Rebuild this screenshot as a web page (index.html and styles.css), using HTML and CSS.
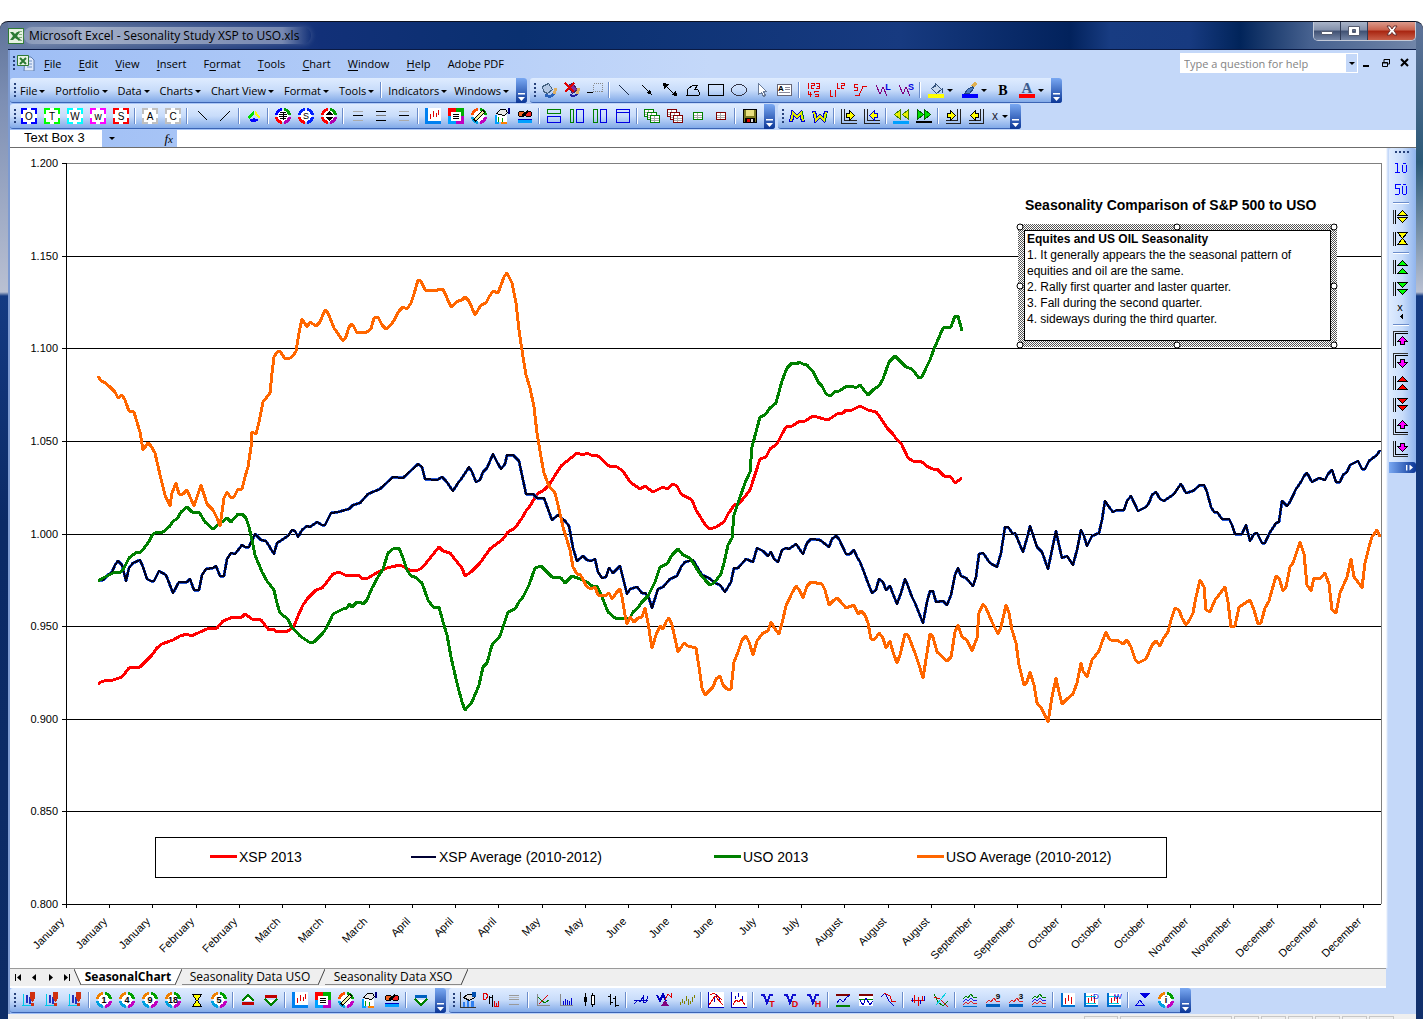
FILE: index.html
```html
<!DOCTYPE html>
<html lang="en">
<head>
    <meta charset="UTF-8">
    <meta name="viewport" content="width=device-width, initial-scale=1.0">
    <title>Microsoft Excel - Sesonality Study XSP to USO.xls</title>
    <link rel="stylesheet" href="styles.css">
</head>
<body>
    <div class="window">
        <header class="titlebar">
            <svg class="icon" viewBox="0 0 16 16"><path d="M0 0h16v16H0z" fill="#2f7a35"/><path d="M1 1h14v14H1z" fill="#e6f2e2"/><path d="M10 3.500h4M11 6.500h3M11 9.500h3M10 12.500h4" stroke="#7fb07c"/><path d="M2 4h3l2 2 2-2h3L9 8l4 4h-3L7 10l-2 2H2l3-4z" fill="#2b7a33"/></svg>
            <h1 class="title">Microsoft Excel - Sesonality Study XSP to USO.xls</h1>
            <div class="window-controls">
                <button class="control" aria-label="Minimize"><svg viewBox="0 0 14 12"><path d="M1.500 6.500h11v3h-11z" fill="#fff" stroke="#555c70"/></svg></button>
                <button class="control" aria-label="Maximize"><svg viewBox="0 0 14 12"><path d="M1.500 1.500h11v9h-11zM5.500 4.500v3h3v-3z" fill="#fff" fill-rule="evenodd" stroke="#555c70"/></svg></button>
                <button class="control close" aria-label="Close"><svg viewBox="0 0 14 12"><path d="M2 1h3l2 3 2-3h3L9 5.500l3 4.500H9L7 7.500 5 10H2l3-4.500z" fill="#fff" stroke="#6a3030"/></svg></button>
            </div>
        </header>

        <main class="client">
            <nav class="menubar">
                <span class="grip"></span>
                <svg class="icon menu-logo" viewBox="0 0 18 16"><path d="M8 2h6l3 3v11H7z" fill="#dfe9fa" stroke="#5c7db0"/><path d="M12 6h3M12 9h3M10 12h5" stroke="#6e8fc4"/><path d="M.5 .5h11v10H.5z" fill="#e6f2e2" stroke="#2f7a35"/><path d="M3 3l6 6M9 3L3 9" stroke="#2b7a33" stroke-width="2"/></svg>
                <div class="menus">
                    <button><u>F</u>ile</button>
                    <button><u>E</u>dit</button>
                    <button><u>V</u>iew</button>
                    <button><u>I</u>nsert</button>
                    <button>F<u>o</u>rmat</button>
                    <button><u>T</u>ools</button>
                    <button><u>C</u>hart</button>
                    <button><u>W</u>indow</button>
                    <button><u>H</u>elp</button>
                    <button>Ado<u>b</u>e PDF</button>
                </div>
                <div class="help-box">
                    <input type="text" aria-label="Help question" placeholder="Type a question for help">
                    <button aria-label="Recent questions"><span class="caret"></span></button>
                </div>
                <div class="doc-controls">
                    <button aria-label="Minimize workbook"><svg viewBox="0 0 10 10"><path d="M1 7h6v2H1z"/></svg></button>
                    <button aria-label="Restore workbook"><svg viewBox="0 0 10 10"><path d="M3 4V1.500h5.500V6H7M3 1.500h6M1.500 4.500h5v4h-5zM1 5h6" fill="none" stroke="#000"/></svg></button>
                    <button aria-label="Close workbook"><svg viewBox="0 0 10 10"><path d="M1 1l7 7M8 1L1 8" stroke="#000" stroke-width="2"/></svg></button>
                </div>
            </nav>

            <div class="toolbar-row">
                <div class="toolbar text-toolbar">
                    <span class="grip"></span>
                    <div class="menus">
                        <button>File<span class="caret"></span></button>
                        <button>Portfolio<span class="caret"></span></button>
                        <button>Data<span class="caret"></span></button>
                        <button>Charts<span class="caret"></span></button>
                        <button>Chart View<span class="caret"></span></button>
                        <button>Format<span class="caret"></span></button>
                        <button>Tools<span class="caret"></span></button>
                    </div>
                    <span class="sep"></span>
                    <div class="menus menus-end">
                        <button>Indicators<span class="caret"></span></button>
                        <button>Windows<span class="caret"></span></button>
                    </div>
                    <button class="cap" aria-label="Toolbar options"></button>
                </div>
                <div class="toolbar" data-tools="paint paintOff gridLine | line arrow arrows freeform rect oval pointer textbox | nums labels curve waveL waveS | fill+ brush+ bold fontColor+"></div>
            </div>

            <div class="toolbar-row">
                <div class="toolbar" data-tools="boxO boxT boxW boxw boxS | boxA boxC | lineDown lineUp | pie | ringList ringS ringMove | rows1 rows2 rows3 | chart report design hand link | splitH splitL splitV splitT | sheetsG sheetsR sheetG sheetR | save"></div>
                <div class="toolbar" data-tools="zigM zigW | inRight inLeft | rewind forward | outRight outLeft x+"></div>
            </div>

            <div class="formula-bar">
                <input class="name-box" type="text" aria-label="Name box" value="Text Box 3">
                <button class="name-drop" aria-label="Names"><span class="caret"></span></button>
                <button class="fx" aria-label="Insert function"><i>f</i><sub>x</sub></button>
                <input class="formula" type="text" aria-label="Formula">
            </div>

            <div class="workspace">
                <svg class="chart" viewBox="10 148 1376 820">
                    <defs>
                        <pattern id="dots" width="2" height="2" patternUnits="userSpaceOnUse">
                            <path d="M0 0h2v2H0z" fill="#fff"/>
                            <path d="M0 0h1v1H0zM1 1h1v1H1z" fill="#555"/>
                        </pattern>
                    </defs>
                    <path class="frame" d="M66 163.500H1381.500V904"/>
                    <g id="grid"></g>
                    <g id="axis-labels"></g>
                    <g id="series"></g>
                    <text class="chart-title" x="1025" y="210">Seasonality Comparison of S&amp;P 500 to USO</text>
                    <g class="note">
                        <rect x="1018" y="224" width="319" height="123" fill="url(#dots)"/>
                        <rect class="note-box" x="1024.500" y="230.500" width="306" height="110"/>
                        <g id="handles"></g>
                        <text class="bold" x="1027" y="243">Equites and US OIL Seasonality</text>
                        <text x="1027" y="259">1. It generally appears the the seasonal pattern of</text>
                        <text x="1027" y="275">equities and oil are the same.</text>
                        <text x="1027" y="291">2. Rally first quarter and laster quarter.</text>
                        <text x="1027" y="307">3. Fall during the second quarter.</text>
                        <text x="1027" y="323">4. sideways during the third quarter.</text>
                    </g>
                    <g class="legend">
                        <rect x="155.500" y="837.500" width="1011" height="40"/>
                        <path d="M210 856.500h27" stroke="#ff0000"/><text x="239" y="862">XSP 2013</text>
                        <path d="M411 857h25" stroke="#000033" class="thin"/><text x="439" y="862">XSP Average (2010-2012)</text>
                        <path d="M714 856.500h27" stroke="#008000"/><text x="743" y="862">USO 2013</text>
                        <path d="M917 856.500h27" stroke="#ff6600"/><text x="946" y="862">USO Average (2010-2012)</text>
                    </g>
                </svg>
                <aside class="toolbar side" data-tools="n10 n50 | spread squeeze | upUp downDown xSide | topUp topDown redUp redDown bottomUp bottomDown"></aside>
            </div>

            <div class="tabs">
                <button class="tab-nav" aria-label="First sheet"><svg viewBox="0 0 9 9"><path d="M1 1h1v7H1zM7 1v7L3 4.500z"/></svg></button>
                <button class="tab-nav" aria-label="Previous sheet"><svg viewBox="0 0 9 9"><path d="M6 1v7L2 4.500z"/></svg></button>
                <button class="tab-nav" aria-label="Next sheet"><svg viewBox="0 0 9 9"><path d="M3 1v7l4-3.500z"/></svg></button>
                <button class="tab-nav" aria-label="Last sheet"><svg viewBox="0 0 9 9"><path d="M7 1h1v7H7zM2 1v7l4-3.500z"/></svg></button>
                <svg class="slant" viewBox="0 0 7 17"><path class="paper" d="M0 0h7v17z"/><path d="M0 0l7 16"/></svg>
                <button class="tab active">SeasonalChart</button>
                <svg class="slant" viewBox="0 0 7 17"><path class="paper" d="M0 0h7L0 17z"/><path d="M7 0L0 16"/></svg>
                <button class="tab">Seasonality Data USO</button>
                <svg class="slant" viewBox="0 0 7 17"><path d="M7 0L0 16"/></svg>
                <button class="tab">Seasonality Data XSO</button>
                <svg class="slant" viewBox="0 0 7 17"><path d="M7 0L0 16"/></svg>
            </div>

            <div class="toolbar-row bottom">
                <div class="toolbar" data-tools="alert1 alert2 alert3 | ring1 ring4 ring9 ring18 hourglass ring5 | roofUp roofDown | chart report design hand link | roofBlue"></div>
                <div class="toolbar" data-tools="studio dw rowsGray | cross bars candle ohlc | trend fan dots | peaks peaks2 | vT vD vH | band band2 slope | volume weave | wave1 wave9 wave3 wave4 | redBars redBarsD redBarsW | flip ringI"></div>
            </div>
        </main>
        <footer class="statusbar">
            <span class="cell wide"></span><span class="cell widest"></span><span class="cell"></span><span class="cell"></span><span class="cell"></span><span class="cell"></span><span class="cell"></span><span class="cell"></span>
        </footer>
    </div>
    <script src="script.js"></script>
</body>
</html>
```
FILE: styles.css
```css
* {
    box-sizing: border-box;
}

body {
    margin: 0;
    padding-top: 21px;
    background: #fff;
    font-family: "Open Sans", "Noto Sans", sans-serif;
    font-size: 11px;
    color: #000;
    height: 100vh;
    overflow: hidden;
}

button {
    border: 0;
    padding: 0;
    background: none;
    font: inherit;
    color: inherit;
    display: flex;
    align-items: center;
    justify-content: center;
}

input {
    border: 0;
    padding: 0;
    font: inherit;
    min-width: 0;
}

.window {
    padding: 0 7px 0 8px;
    height: 100%;
    display: flex;
    flex-direction: column;
    border-top: 1px solid #0b1020;
    border-radius: 8px 8px 0 0;
    background:
        linear-gradient(#5f7399 0, #7d8fb4 80px, #b9c0d2 270px, #143a82 274px, #0b2a66 500px, #0d2c66) left / 8px 100% no-repeat,
        linear-gradient(#5f7399 0, #2c5a78 140px, #b9c0d2 270px, #143a82 274px, #11306b) right / 7px 100% no-repeat,
        linear-gradient(90deg, #6a7fa6, #4a6192 120px, #123078 320px, #0a3070 520px, #173a80 900px, #02225c 1070px, #183c82 1110px, #173a80 1190px, #01245a 1240px, #46618f 1310px, #7488aa);
}

.icon {
    width: 16px;
    height: 16px;
    flex: none;
}

/* title bar */
.titlebar {
    height: 28px;
    display: flex;
    align-items: center;
    border-bottom: 1px solid #0a1a44;
    flex: none;
}

.title {
    margin: 0;
    padding: 0 12px 0 5px;
    font-size: 12px;
    font-weight: normal;
    background: linear-gradient(90deg, rgba(255, 255, 255, 0.25), rgba(255, 255, 255, 0.45) 20%, rgba(255, 255, 255, 0.4) 90%, rgba(255, 255, 255, 0));
    border-radius: 8px;
    box-shadow: 0 0 6px rgba(255, 255, 255, 0.2);
}

.window-controls {
    display: flex;
    margin-left: auto;
    align-self: flex-start;
    height: 19px;
    border: 1px solid #c3cad8;
    border-top: 0;
    border-radius: 0 0 5px 5px;
    overflow: hidden;
}

.control {
    width: 27px;
    border-right: 1px solid #303c58;
    background: linear-gradient(#a9b4c8, #8390ab 45%, #3f5072 50%, #7485a5);
}

.control svg {
    width: 14px;
    height: 12px;
}

.close {
    width: 47px;
    border: 0;
    background: linear-gradient(#dc9a8c, #c8614c 45%, #a82410 50%, #c9604a);
}

.client {
    background: linear-gradient(90deg, #9ebef5, #c4d8f9 700px);
    border-left: 2px solid #7d9ad0;
    flex: none;
}

/* menus */
.menubar {
    height: 28px;
    display: flex;
    align-items: center;
    padding: 0 6px 2px 3px;
}

.grip {
    width: 3px;
    height: 15px;
    flex: none;
    background: repeating-linear-gradient(#27417a 0 2px, transparent 2px 4px);
    background-size: 2px 100%;
    background-repeat: no-repeat;
}

.menus {
    display: flex;
    justify-content: space-between;
    align-items: center;
}

.menubar .menus {
    width: 460px;
    margin-left: 9px;
}

.menu-logo {
    width: 18px;
    margin-left: 1px;
}

u {
    text-underline-offset: 2px;
}

.menus button {
    display: block;
    white-space: nowrap;
}

.caret {
    display: inline-block;
    border: 3px solid transparent;
    border-top-color: #000;
    border-bottom: 0;
    vertical-align: middle;
}

.menus .caret {
    margin-left: 2px;
}

.help-box {
    display: flex;
    width: 178px;
    height: 20px;
    margin-left: auto;
    padding: 1px;
    background: #fff;
}

.help-box input {
    flex: 1;
    padding: 0 3px;
}

.help-box input::placeholder {
    color: #838383;
}

.help-box button {
    width: 11px;
    background: #c4d8f9;
}

.doc-controls {
    display: flex;
    gap: 9px;
    margin-left: 4px;
}

.doc-controls svg {
    width: 10px;
    height: 10px;
    display: block;
}

/* toolbars */
.toolbar-row {
    display: flex;
    gap: 3px;
    height: 26px;
}

.toolbar {
    display: flex;
    align-items: center;
    height: 25px;
    border-radius: 3px;
    border-bottom: 1px solid #3b64b4;
    background: linear-gradient(#dfecff, #c8dcfa 50%, #82aae8);
}

.toolbar .grip {
    margin-left: 4px;
}

.text-toolbar {
    width: 517px;
}

.text-toolbar .menus {
    flex: 1;
    padding: 0 4px 0 3px;
}

.text-toolbar .menus-end {
    flex: none;
    gap: 7px;
    padding: 0 4px;
}

.tool {
    width: 23px;
    height: 23px;
}

.tool .icon {
    shape-rendering: crispEdges;
}

.tool text {
    font-family: "Liberation Sans", Arial, sans-serif;
}

.split {
    width: 34px;
    gap: 3px;
}

.narrow {
    width: 20px;
    gap: 0;
}

.sep {
    width: 6px;
    height: 16px;
    flex: none;
    background: linear-gradient(90deg, transparent 2px, #6a8ccb 2px 3px, #fff 3px 4px, transparent 4px);
}

.cap {
    align-self: stretch;
    width: 11px;
    margin: 0 0 -1px 3px;
    border-radius: 0 3px 3px 0;
    background: linear-gradient(#79a8f2, #0b3696);
    align-items: flex-end;
    padding-bottom: 2px;
}

.cap::after {
    content: "";
    width: 7px;
    height: 8px;
    background: #fff;
    clip-path: polygon(0 0, 100% 0, 100% 20%, 0 20%, 0 50%, 100% 50%, 50% 100%, 0 50%);
}

/* formula bar */
.formula-bar {
    display: flex;
    height: 18px;
    border-bottom: 1px solid #6c6c6c;
    font-family: "Liberation Sans", Arial, sans-serif;
    font-size: 13px;
}

.name-box {
    width: 92px;
    padding: 0 0 2px 14px;
}

.name-drop {
    width: 19px;
}

.fx {
    width: 56px;
    justify-content: flex-end;
    padding-right: 4px;
    font-family: "Liberation Serif", serif;
    font-style: italic;
}

.fx sub {
    font-size: 11px;
}

.formula {
    flex: 1;
}

/* chart */
.workspace {
    display: flex;
    align-items: flex-start;
    gap: 3px;
    background: linear-gradient(90deg, #fff calc(100% - 30px), #c4d8f9 calc(100% - 28px));
}

.chart {
    flex: 1;
    min-width: 0;
    display: block;
    background: #fff;
    font-family: "Liberation Sans", Arial, sans-serif;
    font-size: 11px;
}

.frame {
    fill: none;
    stroke: #808080;
    shape-rendering: crispEdges;
}

#grid path {
    stroke: #000;
    shape-rendering: crispEdges;
}

#series path {
    fill: none;
    stroke-width: 3;
    stroke-linejoin: round;
    shape-rendering: crispEdges;
}

#series .average {
    stroke-width: 2;
}

#axis-labels text {
    text-anchor: end;
}

.chart-title {
    font-size: 14px;
    font-weight: bold;
}

.note text {
    font-size: 12px;
}

.bold {
    font-weight: bold;
}

.note-box,
.note circle {
    fill: #fff;
    stroke: #000;
}

.legend {
    font-size: 14px;
}

.legend rect {
    fill: #fff;
    stroke: #000;
}

.legend path {
    stroke-width: 3;
}

.legend .thin {
    stroke-width: 2;
}

.side {
    width: 27px;
    height: auto;
    flex-direction: column;
    border-bottom: 0;
    background: linear-gradient(90deg, #dfecff, #c8dcfa 50%, #8fb4ee);
}

.side .grip {
    width: 15px;
    height: 3px;
    margin: 3px 0 2px;
    background: repeating-linear-gradient(90deg, #27417a 0 2px, transparent 2px 4px);
    background-size: 100% 2px;
    background-repeat: no-repeat;
}

.side .tool {
    height: 22px;
    margin-right: 3px;
}

.side .sep {
    width: 16px;
    height: 6px;
    margin-right: 3px;
    background: linear-gradient(transparent 2px, #6a8ccb 2px 3px, #fff 3px 4px, transparent 4px);
}

.side .cap {
    width: 100%;
    height: 11px;
    margin: 2px 0 0;
    padding: 0 3px 0 0;
    align-items: center;
    justify-content: flex-end;
    background: linear-gradient(90deg, #79a8f2, #0b3696);
}

.side .cap::after {
    width: 7px;
    height: 6px;
    clip-path: polygon(0 0, 20% 0, 20% 100%, 0 100%, 0 0, 50% 0, 100% 50%, 50% 100%, 50% 0);
}

/* sheet tabs */
.tabs {
    display: flex;
    height: 20px;
    background: #efefef;
    border-top: 1px solid #9a9a9a;
    border-bottom: 2px solid #fff;
    margin-right: 30px;
}

.tab-nav {
    width: 16px;
}

.tab-nav svg {
    width: 9px;
    height: 9px;
}

.slant {
    width: 7px;
    height: 17px;
    flex: none;
    stroke: #444;
}

.slant .paper {
    fill: #fff;
    stroke: none;
}

.tab {
    min-width: 136px;
    height: 16px;
    border-bottom: 1px solid #8a8a8a;
    font-size: 12px;
}

.tab.active {
    min-width: 94px;
    background: #fff;
    font-weight: bold;
}

.statusbar {
    flex: 1;
    display: flex;
    justify-content: flex-end;
    gap: 2px;
    padding: 2px 22px 0 0;
    background: #efefef;
    overflow: hidden;
}

.cell {
    width: 25px;
    height: 12px;
    border: 1px solid #c6c6c6;
}

.wide {
    width: 34px;
}

.widest {
    width: 112px;
}
```
FILE: script.js
```js
// ---------- icon helpers, every icon is drawn on a 16x16 grid ----------
const s = (c, d, w = 1) => `<path d="${d}" fill="none" stroke="${c}" stroke-width="${w}"/>`;
// outlined shapes on whole coordinates move half a pixel to keep a 1px edge
const f = (c, d, edge = "none") => {
    const shift = edge !== "none" && !d.includes(".5") ? ' transform="translate(.5 .5)"' : "";
    return `<path d="${d}" fill="${c}" stroke="${edge}"${shift}/>`;
};
const t = (c, x, y, str, size = 9, weight = "normal") =>
    `<text x="${x}" y="${y}" fill="${c}" font-size="${size}" font-weight="${weight}" text-anchor="middle">${str}</text>`;

const frame = (c, letter) =>
    f("#fff", "M0 0h16v16H0z") +
    s(c, "M1 6V1h5M10 1h5v5M15 10v5h-5M6 15H1v-5", 2) +
    t("#000", 8, 12, letter, 10);

const ring = (tl, tr, br, bl, inner) =>
    '<circle cx="8" cy="8" r="6" fill="#fff"/>' +
    s(tl, "M1.500 7A6.500 6.500 0 0 1 7 1.500", 3) + s(tr, "M9 1.500A6.500 6.500 0 0 1 14.500 7", 3) +
    s(br, "M14.500 9A6.500 6.500 0 0 1 9 14.500", 3) + s(bl, "M7 14.500A6.500 6.500 0 0 1 1.500 9", 3) + inner;

const numRing = n => ring("#f08000", "#00a000", "#c000c0", "#00a0e0", t("#000", 8, 11, n, 9, "bold"));
const rows = (a, b, c) => s(a, "M3 3.500h10") + s(b, "M3 7.500h10") + s(c, "M3 12.500h10");
const sheet = (c, x, y) => f("#fff", `M${x}.5 ${y}.5h9v7h-9z`, c) + s("#aaa", `M${x + 1} ${y + 3}.5h8M${x + 1} ${y + 5}.5h8M${x + 4}.5 ${y + 1}v6`);
const sheets = c => sheet(c, 0, 1) + sheet(c, 3, 4) + sheet(c, 6, 7);
const up = (c, y) => f(c, `M9 ${y}l5 5H4z`, "#000");
const down = (c, y) => f(c, `M4 ${y}h10l-5 5z`, "#000");
const rails = s("#333", "M.5 1v14") + s("#000", "M2.500 1v14");
const alertIcon = s("#00c8e8", "M1 13.500h12M2.500 2v12") + s("#2030c0", "M5.500 3v8M8.500 5v7", 2) +
    f("#d03010", "M9 0h5v6l-2 4h-1L9 6z") + f("#d03010", "M10 11h3v3h-3z");
const waves = s("#008000", "M1 7l3-3 2 2 3-4 3 4 3-1") + s("#2020e0", "M1 10l3-3 2 2 3-3 3 3 3-1") +
    s("#e02020", "M1 13l3-3 2 2 3-3 3 3 3-1") + s("#0070d0", "M1 14.500h14");
const waveNum = n => s("#e02020", "M1 11l3-3 2 2 3-4 3 4 3-1") + f("#0060c0", "M1 12h14v3H1z") + t("#000", 13, 7, n, 8, "bold");
const redBars = extra => f("#fff", "M1 1h14v14H1z") + s("#0070d0", "M2 1v13h13", 2) +
    s("#e00000", "M5.500 6v6M8.500 3v6M11.500 5v7") + extra;
const vIcon = l => s("#1010d0", "M1 3h3l3 8 3-8h3", 2) + t("#e00000", 12, 15, l, 9, "bold");
const wIcon = (l, c) => s("#800080", "M1 3l4 9 3-7 4 9") + t(c, 13, 8, l, 9, "bold");
const railArrow = (path, arrow) => s("#222", path) + arrow;
const rightArrow = f("#ffff00", "M5 5h3V2l5 5-5 5V9H5z", "#000");
const leftArrow = f("#ffff00", "M10 5H7V2L2 7l5 5V9h3z", "#000");
const magUp = f("#ff00ff", "M9 5l5 5h-3v3H7v-3H4z", "#000");
const magDown = f("#ff00ff", "M9 14l5-5h-3V6H7v3H4z", "#000");

const icons = {
    paint: f("#b4c8e4", "M1 4l6-3 4 6-5 4-4-2z", "#42607f") + s("#e0b060", "M15 6l-2 6", 3) + s("#2a62b8", "M4 13q6 3 9-1", 3),
    paintOff: f("#8030a0", "M3 3l5-2 5 6-5 4z", "#402060") + s("#e0b060", "M15 6l-2 6", 3) + s("#2020a0", "M6 13q5 2 7-1", 2) + s("#e00000", "M1 1l9 9M10 1L1 10", 2),
    gridLine: '<path d="M6.500 1.500h9v8h-9z" fill="none" stroke="#888" stroke-dasharray="1 1"/>' + s("#000", "M0 10.500h6"),
    line: s("#1b2c4a", "M3 3l10 10"),
    arrow: s("#000", "M3 3l6 6") + f("#000", "M13 13l-6-2 4-4z"),
    arrows: s("#000", "M3 3l9 9") + f("#000", "M1 1l6 1-5 5zM15 14l-6-1 5-5z"),
    freeform: s("#000", "M2 13l1-6 5-4h5l-3 4q5 0 4 6z"),
    rect: s("#000", "M.5 2.500h15v11H.5z"),
    oval: '<ellipse cx="8" cy="8" rx="7.500" ry="5.500" fill="none" stroke="#334"/>',
    pointer: f("#fff", "M4 1v11l3-2 2 4 2-1-2-4h3z", "#6a7b98"),
    textbox: f("#fff", "M.5 2.500h14v11H.5z", "#667") + t("#000", 4, 9, "A", 8, "bold") + s("#889", "M8 5.500h5M8 7.500h5M2 10.500h11"),
    nums: s("#e00000", "M2.500 1v6M5 1.500h3v2H5.500v3H8M10 1.500h3.500v5H10M11 4.500h2M2.500 9v3H6M4.500 10v5M8 10.500V9h5M9 12.500h3.500v2H9"),
    labels: s("#e00000", "M8.500 1v5.500H11M12 1.500h3v2h-2.500v3H15M1.500 8v6.500H4M6.500 8v7"),
    curve: s("#e00000", "M6 2.500H2.500v3h3v3H2M3 13.500h4l4-9h4"),
    waveL: wIcon("L", "#0000e0"),
    waveS: wIcon("S", "#0000e0"),
    fill: f("#c7d8ee", "M3 6l5-4 5 5-5 4z", "#35547e") + s("#35547e", "M7 5V1M14 6v5") + f("#ffff00", "M0 12h16v4H0z"),
    brush: s("#e0b050", "M14 1l-4 4", 3) + f("#4f7ec0", "M10 4l-5 3-3 4h5l4-5z", "#23497f") + f("#0000ff", "M0 12h16v4H0z"),
    bold: `<text x="8" y="13" text-anchor="middle" font-size="14" font-weight="bold" style="font-family:'Liberation Serif',serif">B</text>`,
    fontColor: `<text x="8" y="11" text-anchor="middle" font-size="15" font-weight="bold" fill="#3b5a8c" style="font-family:'Liberation Serif',serif">A</text>` + f("#ff0000", "M0 12h16v4H0z"),

    boxO: frame("#0000ff", "O"), boxT: frame("#00ff00", "T"), boxW: frame("#00ffff", "W"),
    boxw: frame("#ff00ff", "w"), boxS: frame("#ff0000", "S"),
    boxA: frame("#c0c0c0", "A"), boxC: frame("#c0c0c0", "C"),
    lineDown: s("#000", "M4 3l9 9"), lineUp: s("#000", "M3 13l10-10"),
    pie: f("#00e000", "M8 2v5l-5 4-1-2z") + f("#ffff00", "M9 2l5 7-1 2-4-4z") + f("#0000ff", "M3 12l5-2 5 2q-5 4-10 0z"),
    ringList: ring("#0000ff", "#00a000", "#b000b0", "#ff0000", s("#000", "M5 4.500h6M4 6.500h8M4 8.500h8M5 10.500h6M8.500 4v8")),
    ringS: ring("#0020ff", "#0020ff", "#0020ff", "#ff0000", t("#000", 8, 11, "S", 9)),
    ringMove: ring("#ff0000", "#00a000", "#b000b0", "#ff0000", f("#000", "M8 3l4 4H4zM8 13l4-4H4z")),
    rows1: rows("#aaa", "#000", "#aaa"),
    rows2: rows("#000", "#777", "#000"),
    rows3: rows("#aaa", "#000", "#aaa"),
    rowsGray: rows("#999", "#999", "#999") + s("#bbb", "M3 5.500h10"),
    chart: f("#fff", "M2 0h14v14H2z") + s("#0080f0", "M1.500 0v14.500h14", 3) + s("#e00000", "M5.500 6v5M8.500 3v6M11.500 5v4M13.500 2v5"),
    report: f("#ff0000", "M0 0h8v8H0z") + f("#00b000", "M8 0h8v8H8z") + f("#c000c0", "M8 8h8v8H8z") + f("#00a0ff", "M0 8h8v8H0z") +
        f("#fff", "M3 4h10v9H3z") + s("#000", "M5 6.500h6M5 8.500h6M5 10.500h6"),
    design: ring("#ff5000", "#00a000", "#c000c0", "#00a0e0", s("#000", "M3 13L13 3", 4) + s("#f0f0a0", "M4 12l8-8", 2)),
    hand: f("#fff", "M1 14V7h12v7z") + f("#e8e8e8", "M2 5l4-4h5l2 3-3 3-5-1z", "#000") + f("#000080", "M14 0h2v6h-2z") +
        s("#00a000", "M4.500 9v5M8.500 10v4") + s("#00a0ff", "M1.500 7v8h3", 2) + s("#ff8000", "M7 14.500h6", 2),
    link: '<circle cx="4.500" cy="6" r="3" fill="#f06020" stroke="#000"/><circle cx="11.500" cy="6" r="3" fill="#f02020" stroke="#000"/>' +
        s("#000", "M5 8l6-5", 2) + f("#00a0ff", "M1 12h14v3H1z") + s("#0000c0", "M1 11.500h14"),
    splitH: s("#008000", "M1.500 1.500h13v4h-13z") + s("#0000e0", "M1.500 8.500h13v6h-13z"),
    splitL: s("#008000", "M1.500 1.500h3v13h-3z") + s("#0000e0", "M7.500 1.500h7v13h-7z"),
    splitV: s("#008000", "M1.500 1.500h4v13h-4z") + s("#0000e0", "M8.500 1.500h6v13h-6z"),
    splitT: s("#0000e0", "M1.500 1.500h13v13h-13zM1.500 4.500h13"),
    sheetsG: sheets("#008000"), sheetsR: sheets("#800000"),
    sheetG: sheet("#008000", 3, 4), sheetR: sheet("#800000", 3, 4),
    save: f("#7a7a20", "M1 1h13v13H1z", "#000") + f("#e8e080", "M4 2h8v6H4z") + f("#000", "M3 10h10v5H3z") + f("#e00000", "M5 11h3v3H5z") + f("#ddd", "M9 11h2v3H9z"),
    zigM: s("#0000d0", "M2 14l2-9 4 4 4-4 2 9", 4) + s("#008000", "M10 6l3-3 2 10") + s("#e0e800", "M2 13l2-8 4 4 4-4 2 8", 2),
    zigW: s("#0000d0", "M2 3l2 9 4-4 4 4 2-9", 4) + s("#008000", "M9 10l4 3 2-9") + s("#e0e800", "M2 4l2 8 4-4 4 4 2-8", 2),
    inRight: railArrow("M.5 1v14.500h15M3.500 1v11.500h12", rightArrow),
    inLeft: railArrow("M.5 1v14.500h15M3.500 1v11.500h12", f("#ffff00", "M13 5h-3V2L5 7l5 5V9h3z", "#0000d0")),
    rewind: f("#e8f000", "M7 1v10L1 6zM15 1v10L9 6z", "#408000") + s("#00a0ff", "M0 14h16", 3),
    forward: f("#00e000", "M1 1v10l6-5zM8 1v10l6-5z", "#006000") + s("#000", "M0 14h16", 2),
    outRight: railArrow("M15.500 1v14.500H.5M12.500 1v11.500H.5", f("#ffff00", "M2 5h3V2l5 5-5 5V9H2z", "#000")),
    outLeft: railArrow("M15.500 1v14.500H.5M12.500 1v11.500H.5", leftArrow),
    x: t("#223", 9, 12, "x", 12),

    n10: s("#0000ff", "M2 4.500h2.500v9M2 13.500h5M9.500 5.500v7M13.500 5.500v7M10 4.500h3M10 13.500h3"),
    n50: s("#0000ff", "M7.500 3.500h-5v4h4M6.500 8v5M2 13.500h4M9.500 4.500v8M13.500 4.500v8M10 3.500h3M10 13.500h3"),
    spread: rails + f("#ffff00", "M9 1l5 5H4z", "#000") + f("#ffff00", "M4 8h10l-5 5z", "#000"),
    squeeze: rails + f("#ffff00", "M4 1h10L9 7z", "#000") + f("#ffff00", "M9 7l5 6H4z", "#000"),
    upUp: rails + up("#00ff00", 1) + up("#00ff00", 9),
    downDown: rails + down("#00ff00", 1) + down("#00ff00", 8),
    xSide: t("#000", 7, 8, "x", 11) + f("#000", "M10 11v5l-3-2.500z"),
    topUp: s("#333", "M.5 15V.5H15") + s("#000", "M2.500 15V2.500H15") + magUp,
    topDown: s("#333", "M.5 15V.5H15") + s("#000", "M2.500 15V2.500H15") + magDown,
    redUp: rails + up("#ff0000", 1) + up("#ff0000", 9),
    redDown: rails + down("#ff0000", 1) + down("#ff0000", 8),
    bottomUp: s("#333", "M.5 0v15.500H15") + s("#000", "M2.500 0v13.500H15") + '<g transform="translate(0 -4)">' + magUp + "</g>",
    bottomDown: s("#333", "M.5 0v15.500H15") + s("#000", "M2.500 0v13.500H15") + '<g transform="translate(0 -4)">' + magDown + "</g>",

    alert1: alertIcon, alert2: alertIcon, alert3: alertIcon,
    ring1: numRing("1"), ring4: numRing("4"), ring9: numRing("9"), ring18: numRing("18"), ring5: numRing("5"), ringI: numRing("i"),
    hourglass: f("#ffff00", "M4 2h9L9 8l4 6H4l4-6z", "#000"),
    roofUp: f("#fff", "M3 9l5-5 5 5z") + s("#008000", "M2 9l6-6 6 6", 2) + f("#c00000", "M2 10h12v3H2z"),
    roofDown: f("#c00000", "M2 3h12v3H2z") + f("#fff", "M3 8l5 5 5-5z") + s("#008000", "M2 7l6 6 6-6", 2),
    roofBlue: f("#0060c0", "M2 3h12v3H2z") + f("#fff", "M3 8l5 5 5-5z") + s("#008000", "M2 7l6 6 6-6", 2),
    studio: s("#333", "M.5 0v15.500H16") + f("#3080f0", "M3 10h2v5H3zM7 8h2v7H7zM11 9h3v6h-3z") + f("#ddd", "M3 5l4-3h5l2 3-5 3z", "#000") + f("#0050b0", "M12 0h4v5h-4z"),
    dw: s("#e00000", "M.5 1v6H3l1.500-2V3L3 1.500H.5") + s("#000", "M9.500 3v12M6 5.500h3M6.500 4v8") + s("#e00000", "M11.500 9v5.500h4V9M13.500 11v3"),
    cross: s("#888", "M2.500 2v11.500H15") + s("#008000", "M3 5l4 4 3 2 4-3") + s("#e00000", "M4 12l9-9"),
    bars: s("#888", "M2.500 2v11.500H15") + s("#0000d0", "M5.500 9v4M7.500 7v6M9.500 8v5M11.500 9v4M13.500 6v7"),
    candle: s("#000", "M4.500 1v13M11.500 1v14") + f("#000", "M3 5h3v5H3z") + f("#fff", "M10.500 3.500h3v9h-3z", "#000"),
    ohlc: s("#000", "M6.500 2v11M11.500 4v11M4 4.500h3M7 10.500h2M9 6.500h3M12 13.500h3"),
    trend: s("#0000c0", "M1 12l4-4 2 2 3-5v5h3l2-6") + s("#0000c0", "M1 8.500h14"),
    fan: s("#0000c0", "M1 3l3 6 3-7 3 7", 2) + s("#e00000", "M9 8l3-6 3 3V1") + f("#800080", "M5 14h8l-4-6z"),
    dots: s("#808000", "M1.500 10v3M3.500 7v4M5.500 9v3M7.500 4v5M9.500 7v6M11.500 9v3M13.500 5v5M15.500 3v3"),
    peaks: f("#fff", "M0 0h16v15H0z") + s("#0000c0", "M.5 0v15H16M6 6v4M8 2v4M11 5v5") + s("#e00000", "M1 13l6-9 8 9M2 3l4-2 8 7"),
    peaks2: f("#fff", "M0 0h16v15H0z") + s("#0000c0", "M.5 0v15H16M4 4v3M7 1v4M11 4v4") + s("#e00000", "M2 13l3-5 3 2 2-3 4 6"),
    vT: vIcon("T"), vD: vIcon("D"), vH: vIcon("H"),
    band: s("#800000", "M1 2.500h14", 2) + s("#008000", "M1 13.500h14", 2) + s("#0000c0", "M2 11l3-4 3 3 4-5 3-2"),
    band2: f("#fff", "M1 2h14v12H1z") + s("#800000", "M1 2.500h14", 2) + s("#008000", "M1 7.500h14") + s("#0000c0", "M2 8l3 5 3-7 4 7 3-4"),
    slope: s("#0000c0", "M0 5l4-4 4 8 5 5") + s("#e00000", "M3 1l6 3 2 6 4-1"),
    volume: s("#e00000", "M1 8.500h14M4.500 3v8M8.500 5v9M12.500 4v4") + s("#0000c0", "M2.500 6v4M10.500 8v4M14.500 4v5"),
    weave: s("#008000", "M1 2l4 8 5 4 5-5") + s("#e00000", "M1 5l6 2 8 8") + s("#00d0e0", "M3 13l10-12"),
    wave1: waves, wave4: waves, wave9: waveNum("9"), wave3: waveNum("3"),
    redBars: redBars(""),
    redBarsD: redBars(s("#00d0e0", "M3 4.500h10M3 11.500h10") + t("#0000e0", 13, 7, "D", 8)),
    redBarsW: redBars(s("#00d0e0", "M3 4.500h10M3 11.500h10") + t("#0000e0", 12, 7, "W", 8)),
    flip: f("#0000e0", "M5 1h10l-5 6z") + s("#0000e0", "M1 13.500h8L5 8z")
};

document.querySelectorAll("[data-tools]").forEach(bar => {
    let html = '<span class="grip"></span>';
    bar.dataset.tools.split(" ").forEach(item => {
        if (item === "|") {
            html += '<span class="sep"></span>';
            return;
        }
        const split = item.endsWith("+");
        const name = item.replace("+", "");
        const cls = name === "x" ? "tool narrow" : split ? "tool split" : "tool";
        html += `<button class="${cls}" aria-label="${name}"><svg class="icon" viewBox="0 0 16 16">${icons[name]}</svg>` +
            (split ? '<span class="caret"></span>' : "") + "</button>";
    });
    bar.innerHTML = html + '<button class="cap" aria-label="Toolbar options"></button>';
});

// ---------- chart ----------
const LEFT = 66, RIGHT = 1381, TOP = 163, BOTTOM = 904;

let grid = `<path d="M${LEFT + 0.5} ${TOP}V${BOTTOM + 4}"/>`;
let labels = "";
for (let i = 0; i <= 8; i++) {
    const y = Math.round(TOP + i * (BOTTOM - TOP) / 8);
    grid += `<path d="M${LEFT - 4} ${y + 0.5}H${i ? RIGHT : LEFT}"/>`;
    labels += `<text x="58" y="${y + 4}">${(1.2 - i * 0.05).toFixed(3)}</text>`;
}

const months = [["January", 3], ["February", 2], ["March", 3], ["April", 3], ["May", 2], ["June", 3],
    ["July", 2], ["August", 3], ["September", 2], ["October", 3], ["November", 2], ["December", 3]];
let n = 0;
months.forEach(([name, count]) => {
    for (let i = 0; i < count; i++) {
        const x = Math.round(LEFT + n * 43.24);
        grid += `<path d="M${x + 0.5} ${BOTTOM}v4"/>`;
        labels += `<text transform="translate(${x - 1} 922) rotate(-45)">${name}</text>`;
        n++;
    }
});
document.getElementById("grid").innerHTML = grid;
document.getElementById("axis-labels").innerHTML = labels;

const xspAverage = "98,580 103,580 108,575 112,572 115,565 118,561 122,565 126,581 129,568 133,563 140,560 143,567 147,579 151,581 154,581 159,571 166,575 173,593 179,582 187,582 190,579 194,590 199,590 202,575 206,569 213,568 216,566 220,576 224,576 227,559 231,553 235,554 242,545 245,547 249,547 255,534 261,540 266,541 274,554 277,543 288,536 292,530 295,531 298,537 302,530 307,526 310,527 317,522 322,525 325,525 331,513 338,512 349,509 353,505 360,503 368,494 380,489 393,477 403,478 418,464 422,467 425,479 437,480 442,477 446,481 453,491 458,483 462,478 469,467 472,472 476,482 480,480 483,472 487,468 493,454 497,462 501,469 505,464 507,455 513,455 519,461 522,475 526,494 533,494 537,498 544,498 552,520 558,515 565,521 569,526 573,548 577,561 583,556 587,560 591,561 595,559 598,572 602,578 606,577 609,568 613,573 620,566 623,578 627,594 630,589 637,587 642,593 645,593 649,598 652,608 658,589 663,587 670,579 677,576 681,567 685,562 693,560 702,575 709,578 715,583 720,585 725,592 731,582 734,568 738,568 746,559 753,562 757,548 763,551 768,556 771,552 774,559 778,562 782,550 786,548 789,549 796,544 803,554 807,543 811,539 820,540 829,547 832,539 836,536 839,539 846,554 850,554 854,550 857,557 860,562 864,572 868,583 872,593 876,590 879,579 883,582 886,590 890,586 893,594 897,604 901,593 905,579 908,586 912,597 915,603 923,623 927,602 930,591 933,591 936,602 943,601 947,605 951,595 955,575 958,568 961,576 966,578 973,586 976,577 979,554 983,553 990,563 997,567 1001,553 1005,527 1008,527 1013,534 1015,533 1023,552 1027,538 1030,526 1037,547 1042,552 1048,569 1052,550 1056,531 1059,545 1062,558 1067,556 1073,565 1077,550 1081,530 1084,536 1087,546 1092,536 1099,533 1102,520 1105,501 1109,507 1113,512 1117,510 1124,510 1127,501 1131,496 1138,511 1146,507 1149,503 1152,495 1156,492 1160,499 1164,501 1174,494 1178,488 1181,484 1186,493 1193,491 1200,485 1204,485 1207,492 1211,507 1214,512 1217,512 1222,519 1229,519 1232,525 1235,534 1242,534 1246,525 1250,541 1254,534 1257,533 1262,543 1265,543 1269,534 1276,523 1279,522 1282,501 1287,506 1290,502 1296,489 1301,482 1304,476 1307,473 1312,482 1319,478 1325,480 1328,474 1332,470 1336,482 1340,482 1343,475 1347,472 1350,465 1358,461 1362,469 1365,469 1369,461 1377,455 1380,450";

const xsp2013 = "98,684 101,682 107,680 113,680 122,677 129,668 140,667 152,655 157,648 162,644 173,640 180,636 187,634 191,636 207,629 217,628 223,621 233,617 242,617 245,614 252,619 261,620 269,630 273,629 277,632 288,631 294,626 298,616 303,605 308,598 316,590 322,588 327,582 333,574 339,572 345,575 358,575 363,579 368,578 378,572 387,568 400,565 410,570 418,570 422,568 439,547 443,551 450,553 462,568 465,576 471,572 480,563 490,549 503,539 508,532 515,528 522,518 526,511 530,506 537,494 544,490 549,485 561,466 577,453 583,455 587,453 591,455 598,456 609,466 617,467 623,471 630,482 640,489 645,486 653,492 663,487 667,489 673,484 677,486 681,494 692,500 696,510 706,526 710,529 716,527 724,522 728,514 735,504 739,504 750,490 760,459 766,457 770,449 777,444 782,434 786,427 792,426 800,421 805,421 813,416 828,420 837,414 843,413 846,410 852,410 860,406 868,410 876,412 880,417 887,428 893,434 897,440 901,443 908,458 913,461 922,462 928,467 933,469 937,469 944,476 951,477 955,483 962,478";

const uso2013 = "98,581 103,578 109,575 115,572 120,573 124,568 129,558 137,552 141,552 148,543 153,534 157,532 163,532 170,526 173,521 177,519 181,512 187,507 192,512 199,512 205,522 213,529 218,525 227,518 231,522 238,514 242,514 246,518 249,527 252,540 255,555 262,572 267,581 274,590 277,603 280,613 288,619 291,626 300,636 309,642 314,642 323,633 327,627 333,614 343,609 347,608 349,604 352,607 357,602 360,602 363,604 367,600 372,588 378,577 383,569 388,553 393,549 399,548 403,558 407,570 411,576 415,577 422,583 428,600 433,607 439,607 443,622 447,635 451,657 457,683 462,702 465,710 472,702 479,685 483,667 487,663 492,645 500,636 508,612 515,609 519,602 523,597 529,585 535,568 541,566 552,577 561,578 565,583 572,576 580,579 587,582 592,586 597,586 602,597 608,612 615,618 630,618 633,612 637,609 642,602 648,596 655,582 660,567 667,564 672,555 678,549 683,555 690,558 700,574 706,581 710,585 714,583 721,574 724,563 728,545 732,538 734,515 738,503 745,483 750,472 752,447 756,432 760,417 765,415 770,408 776,403 782,381 787,368 792,363 797,364 799,362 803,364 807,365 814,373 818,382 822,386 826,394 830,396 836,391 839,391 847,386 854,387 857,387 860,385 868,395 874,389 879,386 883,379 889,362 895,356 906,367 912,369 919,378 922,377 927,366 930,360 934,349 943,328 951,327 955,316 958,316 962,331";

const usoAverage = "98,376 101,381 104,382 110,387 115,392 118,398 122,395 125,400 129,411 134,412 140,432 143,450 148,443 151,446 155,453 160,475 165,495 170,506 172,493 176,483 179,494 183,494 187,490 194,506 197,497 201,485 207,504 213,510 217,518 220,526 222,512 224,498 227,492 231,498 234,497 238,489 242,489 245,477 248,467 251,447 252,432 256,434 259,422 263,402 270,393 272,373 274,357 277,352 280,351 285,359 290,358 293,356 296,351 299,333 302,319 307,327 310,322 316,326 320,322 325,310 328,313 334,328 343,341 346,337 349,327 352,324 354,327 357,333 362,332 367,332 371,329 374,318 378,317 382,325 386,329 389,327 393,322 399,311 403,307 407,309 411,303 414,294 418,280 421,281 425,290 436,291 439,289 443,289 451,307 458,301 462,300 465,297 469,301 475,315 481,305 486,303 489,297 493,291 498,293 504,277 507,273 512,283 516,303 519,330 523,357 526,375 530,388 534,407 537,433 541,457 544,473 549,486 555,493 558,505 563,527 570,550 573,567 577,574 580,574 587,587 591,589 595,587 598,595 605,596 609,593 612,599 617,592 620,589 622,597 625,615 627,624 630,617 634,622 638,618 642,617 645,608 648,623 652,648 656,635 660,626 663,629 666,622 669,618 672,625 678,652 684,643 688,646 696,648 699,667 702,688 705,695 713,687 716,679 720,676 723,685 727,689 731,689 734,662 738,652 742,640 746,636 749,642 753,655 757,641 763,633 768,631 771,622 775,629 779,634 782,623 786,606 792,593 796,586 800,591 803,598 807,586 811,582 822,584 825,590 829,605 833,601 837,598 840,601 846,608 854,605 858,614 861,611 865,615 868,623 871,639 875,639 879,633 883,638 886,648 890,641 893,652 897,663 900,655 905,634 908,635 915,653 919,665 923,678 927,653 930,634 933,637 937,652 947,661 951,657 955,632 958,625 962,637 967,640 972,651 977,638 979,613 983,604 986,608 992,622 998,634 1001,627 1006,605 1009,613 1012,630 1016,643 1019,665 1024,685 1027,682 1030,672 1034,685 1037,703 1042,709 1048,722 1052,697 1056,678 1059,692 1062,704 1067,699 1073,694 1077,683 1081,663 1083,671 1087,677 1092,660 1099,651 1102,642 1106,632 1109,639 1113,641 1117,640 1123,644 1127,640 1131,647 1135,659 1138,663 1146,659 1152,645 1156,641 1160,646 1163,639 1168,632 1171,620 1175,608 1179,610 1182,618 1186,625 1189,621 1193,613 1196,597 1200,580 1204,587 1206,610 1210,612 1215,600 1225,587 1228,602 1231,627 1235,626 1239,607 1250,600 1254,610 1258,624 1261,623 1265,608 1269,601 1272,590 1276,576 1279,578 1283,591 1286,587 1290,567 1293,563 1300,542 1304,554 1307,585 1311,591 1314,578 1321,578 1325,573 1329,584 1332,610 1336,613 1340,593 1347,577 1351,559 1354,577 1358,582 1362,588 1365,563 1369,547 1372,537 1377,530 1380,537";

const draw = (points, color, cls = "") => `<path class="${cls}" stroke="${color}" d="M${points}"/>`;
document.getElementById("series").innerHTML =
    draw(xsp2013, "#ff0000") +
    draw(xspAverage, "#2456d8") + draw(xspAverage, "#000020", "average") +
    draw(uso2013, "#008000") +
    draw(usoAverage, "#ff6600");

let handles = "";
[227, 286, 345].forEach(y => [1020, 1177, 1334].forEach(x => {
    if (y !== 286 || x !== 1177) {
        handles += `<circle cx="${x}" cy="${y}" r="3"/>`;
    }
}));
document.getElementById("handles").innerHTML = handles;
```
